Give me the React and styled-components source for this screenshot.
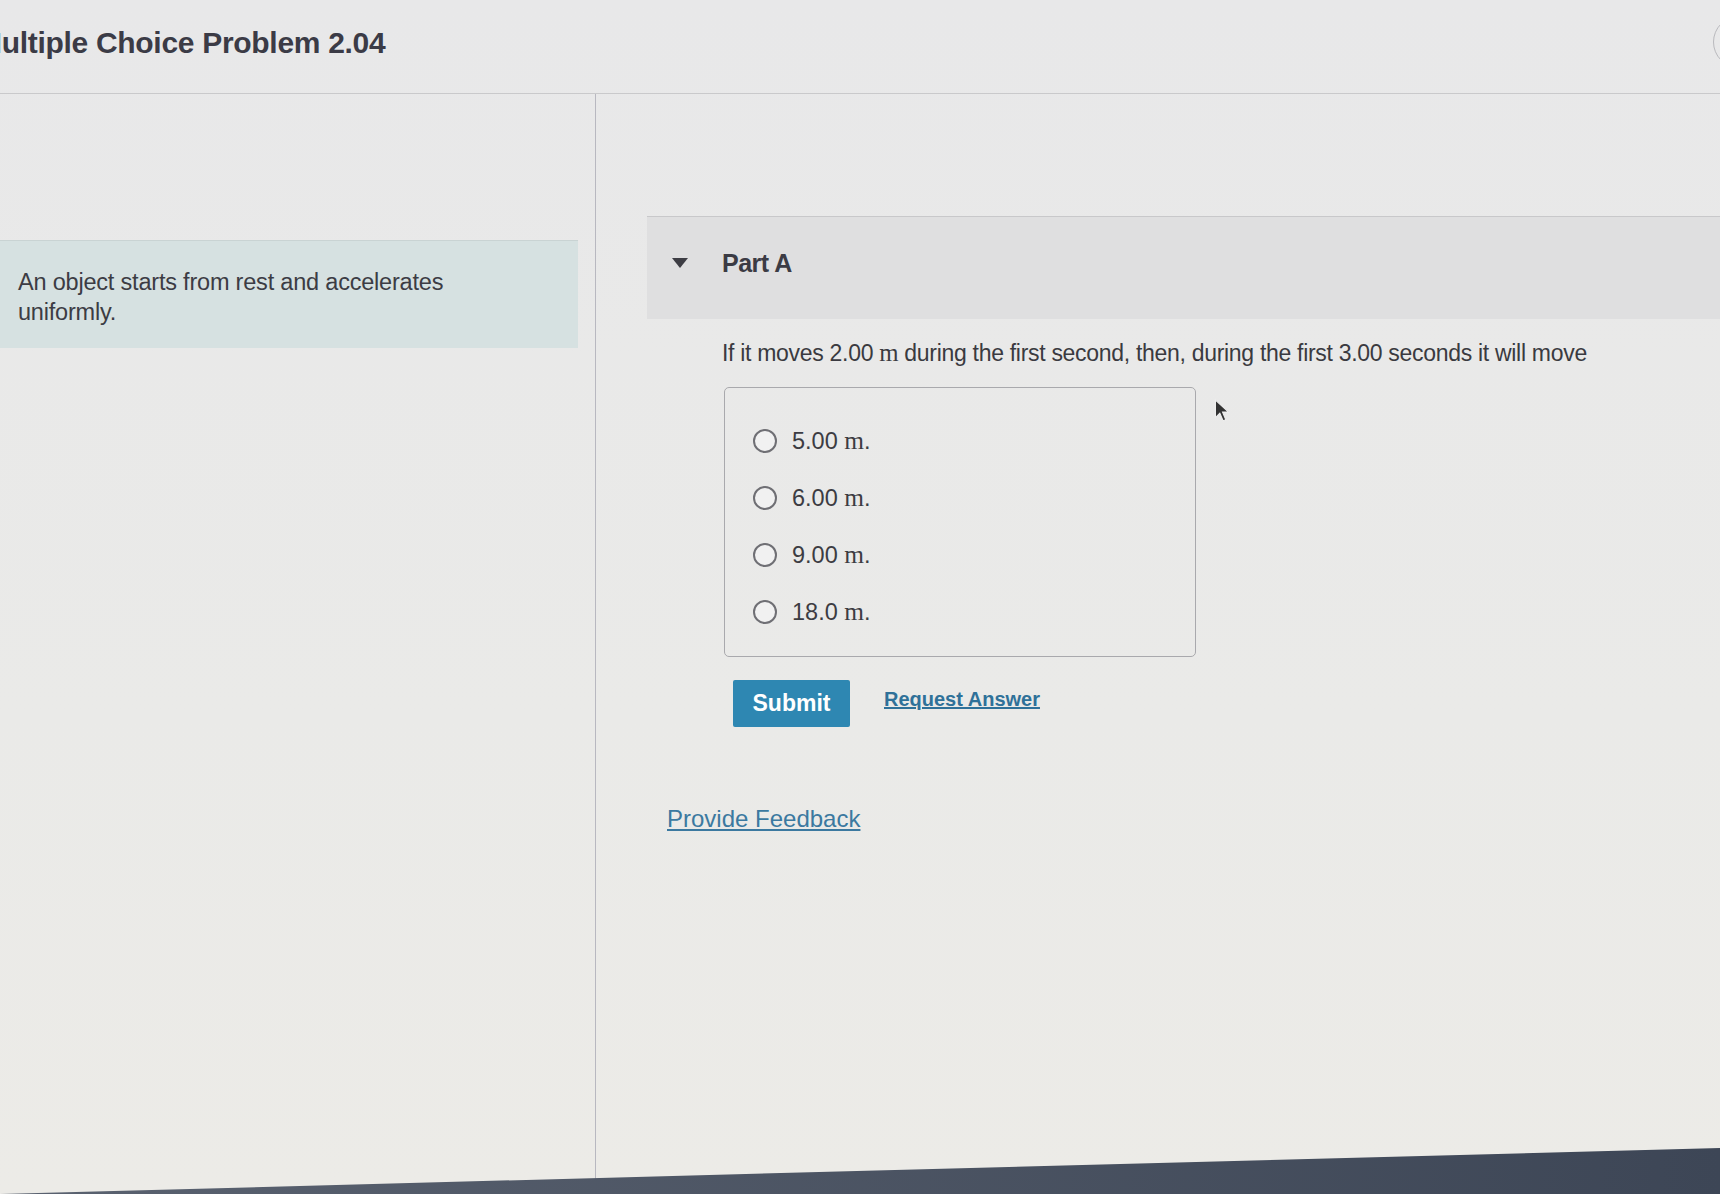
import React from 'react';
import styled, { createGlobalStyle } from 'styled-components';

const GlobalStyle = createGlobalStyle`
  html, body {
    margin: 0;
    padding: 0;
    background: #e9e9e9;
    font-family: "Liberation Sans", Arial, sans-serif;
    color: #3a3a3e;
  }
`;

const options = ['5.00', '6.00', '9.00', '18.0'];

const App = () => {
  return (
    <Page>
      <GlobalStyle />
      <Header>
        <Title>Multiple Choice Problem 2.04</Title>
        <CornerButton />
      </Header>
      <Main>
        <LeftColumn>
          <Intro>An object starts from rest and accelerates uniformly.</Intro>
        </LeftColumn>
        <RightColumn>
          <PartHeader>
            <Caret viewBox="0 0 16 10">
              <path d="M0 0 H16 L8 10 Z" fill="#3d3d44" />
            </Caret>
            <PartTitle>Part A</PartTitle>
          </PartHeader>
          <PartBody>
            <Question>
              If it moves 2.00 <MathUnit>m</MathUnit> during the first second, then, during the first 3.00 seconds it will move
            </Question>
            <ChoiceRow>
              <ChoiceBox>
                {options.map((val) => (
                  <Choice key={val}>
                    <Radio />
                    <span>
                      {val} <MathUnit>m</MathUnit>.
                    </span>
                  </Choice>
                ))}
              </ChoiceBox>
              <Cursor viewBox="0 0 14 22">
                <path d="M1 1 L1 17 L5 13 L8 20 L10.5 19 L7.5 12 L13 12 Z" fill="#333" stroke="#eee" strokeWidth="1" />
              </Cursor>
            </ChoiceRow>
            <Actions>
              <SubmitButton>Submit</SubmitButton>
              <LinkButton href="#">Request Answer</LinkButton>
            </Actions>
          </PartBody>
          <Feedback href="#">Provide Feedback</Feedback>
        </RightColumn>
      </Main>
      <Bezel />
    </Page>
  );
};

export default App;

const Page = styled.div`
  min-height: 100vh;
  display: flex;
  flex-direction: column;
  overflow: hidden;
  background: linear-gradient(180deg, #e8e8e9 0%, #eaeae8 60%, #ecebe7 100%);
`;

const Header = styled.header`
  height: 94px;
  display: flex;
  align-items: center;
  justify-content: space-between;
  border-bottom: 1px solid #c9c9cb;
  box-sizing: border-box;
`;

const Title = styled.h1`
  margin: 0 0 8px -23px;
  font-size: 30px;
  font-weight: bold;
  color: #3b3b46;
  letter-spacing: -0.3px;
`;

const CornerButton = styled.div`
  width: 50px;
  height: 50px;
  border: 1.5px solid #b9b9bd;
  border-radius: 50%;
  margin-right: -45px;
  margin-bottom: 10px;
`;

const Main = styled.main`
  flex: 1;
  display: grid;
  grid-template-columns: 596px 1fr;
`;

const LeftColumn = styled.section`
  border-right: 1px solid #b8b8c0;
  padding-top: 146px;
`;

const Intro = styled.p`
  margin: 0;
  width: 578px;
  height: 108px;
  box-sizing: border-box;
  padding: 26px 100px 0 18px;
  background: #d6e1e1;
  border-top: 1px solid #c9d3d3;
  font-size: 23.5px;
  line-height: 30px;
  color: #3c3c44;
  letter-spacing: -0.2px;
`;

const RightColumn = styled.section`
  padding-top: 122px;
  padding-left: 51px;
`;

const PartHeader = styled.div`
  height: 103px;
  display: flex;
  align-items: center;
  gap: 34px;
  padding: 0 0 10px 25px;
  box-sizing: border-box;
  background: #dfdfe0;
  border-top: 1.5px solid #c8c8ca;
`;

const Caret = styled.svg`
  width: 16px;
  height: 10px;
`;

const PartTitle = styled.h2`
  margin: 0;
  font-size: 25px;
  font-weight: bold;
  color: #3b3b44;
  letter-spacing: -0.5px;
`;

const PartBody = styled.div`
  padding: 20px 0 0 75px;
`;

const Question = styled.p`
  margin: 0 0 20px;
  font-size: 23px;
  line-height: 28px;
  color: #3a3a40;
  letter-spacing: -0.3px;
  white-space: nowrap;
`;

const MathUnit = styled.span`
  font-family: "Liberation Serif", "Times New Roman", serif;
  font-size: 1.08em;
`;

const ChoiceRow = styled.div`
  display: flex;
  align-items: flex-start;
`;

const ChoiceBox = styled.div`
  width: 472px;
  height: 270px;
  margin-left: 2px;
  box-sizing: border-box;
  border: 1.5px solid #a9a9ad;
  border-radius: 5px;
  padding: 27px 0 0 28px;
  display: flex;
  flex-direction: column;
  gap: 6px;
`;

const Choice = styled.label`
  display: flex;
  align-items: center;
  gap: 15px;
  height: 51px;
  font-size: 23.5px;
  color: #3c3c42;
`;

const Radio = styled.span`
  width: 20px;
  height: 20px;
  border: 2px solid #6f6f74;
  border-radius: 50%;
  background: #f1f1f1;
`;

const Cursor = styled.svg`
  width: 16px;
  height: 24px;
  margin: 12px 0 0 18px;
`;

const Actions = styled.div`
  display: flex;
  align-items: center;
  gap: 34px;
  margin: 23px 0 0 11px;
`;

const SubmitButton = styled.button`
  width: 117px;
  height: 47px;
  border: none;
  border-radius: 2px;
  background: #2e87b2;
  color: #fff;
  font-family: inherit;
  font-size: 23px;
  font-weight: bold;
  cursor: pointer;
`;

const LinkButton = styled.a`
  font-size: 20px;
  font-weight: bold;
  color: #2f7199;
  text-decoration: underline;
  margin-top: -8px;
`;

const Feedback = styled.a`
  display: inline-block;
  margin: 78px 0 0 20px;
  font-size: 24px;
  color: #3b79a0;
  text-decoration: underline;
`;

const Bezel = styled.div`
  height: 46px;
  margin-top: -46px;
  background: linear-gradient(90deg, #5a6270, #3d4656);
  clip-path: polygon(0 100%, 100% 0, 100% 100%);
`;
